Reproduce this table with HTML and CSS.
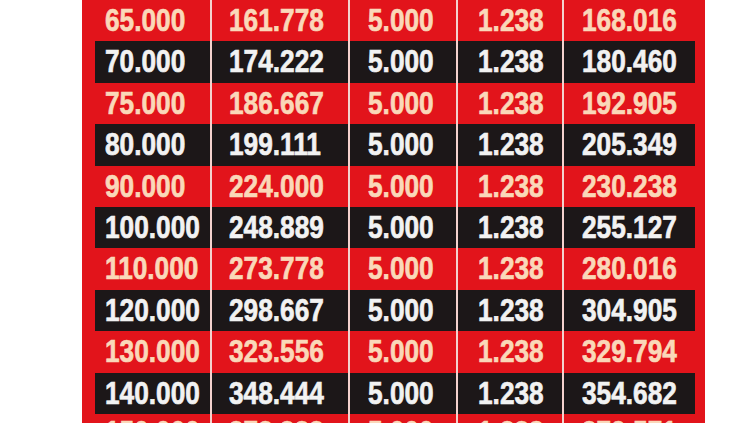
FILE: index.html
```html
<!DOCTYPE html>
<html>
<head>
<meta charset="utf-8">
<link rel="stylesheet" href="styles.css">
</head>
<body>
<div class="table">
  <div class="row red"><div class="c c1"><span>65.000</span></div><div class="c c2"><span>161.778</span></div><div class="c c3"><span>5.000</span></div><div class="c c4"><span>1.238</span></div><div class="c c5"><span>168.016</span></div></div>
  <div class="row black"><div class="c c1"><span>70.000</span></div><div class="c c2"><span>174.222</span></div><div class="c c3"><span>5.000</span></div><div class="c c4"><span>1.238</span></div><div class="c c5"><span>180.460</span></div></div>
  <div class="row red"><div class="c c1"><span>75.000</span></div><div class="c c2"><span>186.667</span></div><div class="c c3"><span>5.000</span></div><div class="c c4"><span>1.238</span></div><div class="c c5"><span>192.905</span></div></div>
  <div class="row black"><div class="c c1"><span>80.000</span></div><div class="c c2"><span>199.111</span></div><div class="c c3"><span>5.000</span></div><div class="c c4"><span>1.238</span></div><div class="c c5"><span>205.349</span></div></div>
  <div class="row red"><div class="c c1"><span>90.000</span></div><div class="c c2"><span>224.000</span></div><div class="c c3"><span>5.000</span></div><div class="c c4"><span>1.238</span></div><div class="c c5"><span>230.238</span></div></div>
  <div class="row black"><div class="c c1"><span>100.000</span></div><div class="c c2"><span>248.889</span></div><div class="c c3"><span>5.000</span></div><div class="c c4"><span>1.238</span></div><div class="c c5"><span>255.127</span></div></div>
  <div class="row red"><div class="c c1"><span>110.000</span></div><div class="c c2"><span>273.778</span></div><div class="c c3"><span>5.000</span></div><div class="c c4"><span>1.238</span></div><div class="c c5"><span>280.016</span></div></div>
  <div class="row black"><div class="c c1"><span>120.000</span></div><div class="c c2"><span>298.667</span></div><div class="c c3"><span>5.000</span></div><div class="c c4"><span>1.238</span></div><div class="c c5"><span>304.905</span></div></div>
  <div class="row red"><div class="c c1"><span>130.000</span></div><div class="c c2"><span>323.556</span></div><div class="c c3"><span>5.000</span></div><div class="c c4"><span>1.238</span></div><div class="c c5"><span>329.794</span></div></div>
  <div class="row black"><div class="c c1"><span>140.000</span></div><div class="c c2"><span>348.444</span></div><div class="c c3"><span>5.000</span></div><div class="c c4"><span>1.238</span></div><div class="c c5"><span>354.682</span></div></div>
  <div class="row red last"><div class="c c1"><span>150.000</span></div><div class="c c2"><span>373.333</span></div><div class="c c3"><span>5.000</span></div><div class="c c4"><span>1.238</span></div><div class="c c5"><span>379.571</span></div></div>
</div>
</body>
</html>
```
FILE: styles.css
```css
html, body {
  margin: 0;
  padding: 0;
  background: #ffffff;
  overflow: hidden;
}
.table {
  width: 623px;
  margin: 0 0 0 82px;
  background: #e2141b;
  font-family: "Liberation Sans", Arial, sans-serif;
  font-weight: bold;
  font-size: 32px;
}
.row {
  display: grid;
  grid-template-columns: 128px 138px 108px 106px 143px;
  height: 41.4px;
}
.row.red {
  background: #e2141b;
  color: #fad8b9;
}
.row.black {
  background: linear-gradient(to right, #e2141b 13px, #1c1718 13px, #1c1718 calc(100% - 10px), #e2141b calc(100% - 10px));
  color: #f2f2f2;
}
.c {
  box-sizing: border-box;
  height: 41.4px;
  line-height: 41.4px;
  text-align: left;
  white-space: nowrap;
}
.row.last .c {
  line-height: 36px;
}
.c span {
  display: inline-block;
  transform: scaleX(0.82);
  transform-origin: left center;
  -webkit-text-stroke: 0.7px currentColor;
}
.c2, .c3, .c4, .c5 {
  border-left: 2px solid #f4d2ce;
}
.c1 { padding-left: 23px; }
.c2 { padding-left: 17px; }
.c3 { padding-left: 18px; }
.c4 { padding-left: 20px; }
.c5 { padding-left: 18px; }
```
